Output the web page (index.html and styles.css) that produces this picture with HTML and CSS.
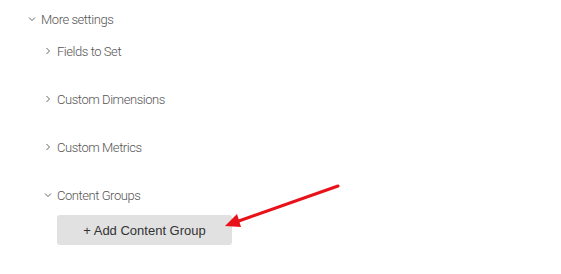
FILE: index.html
```html
<!DOCTYPE html>
<html lang="en">
<head>
    <meta charset="UTF-8">
    <title>More settings</title>
    <link rel="stylesheet" href="styles.css">
</head>
<body>
    <div class="settings">
        <div class="row top">
            <svg class="chev" width="8" height="8" viewBox="0 0 8 8"><path d="M1 2.5 L4 5.5 L7 2.5" fill="none" stroke="#666" stroke-width="1"/></svg>
            <span>More settings</span>
        </div>
        <div class="group">
            <div class="row">
                <svg class="chev" width="8" height="8" viewBox="0 0 8 8"><path d="M2.5 1 L5.5 4 L2.5 7" fill="none" stroke="#666" stroke-width="1"/></svg>
                <span>Fields to Set</span>
            </div>
            <div class="row">
                <svg class="chev" width="8" height="8" viewBox="0 0 8 8"><path d="M2.5 1 L5.5 4 L2.5 7" fill="none" stroke="#666" stroke-width="1"/></svg>
                <span>Custom Dimensions</span>
            </div>
            <div class="row">
                <svg class="chev" width="8" height="8" viewBox="0 0 8 8"><path d="M2.5 1 L5.5 4 L2.5 7" fill="none" stroke="#666" stroke-width="1"/></svg>
                <span>Custom Metrics</span>
            </div>
            <div class="row">
                <svg class="chev" width="8" height="8" viewBox="0 0 8 8"><path d="M1 2.5 L4 5.5 L7 2.5" fill="none" stroke="#666" stroke-width="1"/></svg>
                <span>Content Groups</span>
            </div>
            <button class="add-btn" type="button">+ Add Content Group</button>
        </div>
    </div>

    <svg class="arrow" width="561" height="274" viewBox="0 0 561 274">
        <line x1="338" y1="186" x2="236" y2="222" stroke="#e8131a" stroke-width="3" stroke-linecap="round"/>
        <polygon points="225,226 237,214 241,227" fill="#e8131a"/>
    </svg>
</body>
</html>
```

FILE: styles.css
```css
body {
    margin: 0;
    background-color: #fff;
    font-family: Roboto, "Liberation Sans", sans-serif;
    color: #555;
}
.settings {
    padding: 7px 0 0 28px;
}
.row {
    display: flex;
    align-items: center;
    height: 24px;
    font-size: 13px;
    font-weight: 300;
    letter-spacing: -0.45px;
}
.row .chev {
    margin-right: 5px;
}
.group {
    padding-left: 16px;
}
.group .row {
    margin-top: 24px;
}
.group .row:first-child {
    margin-top: 8px;
}
.add-btn {
    display: block;
    margin: 8px 0 0 13px;
    width: 175px;
    height: 30px;
    border: none;
    border-radius: 3px;
    background-color: #e1e1e1;
    color: #333;
    font-family: "Liberation Sans", Arial, sans-serif;
    font-size: 13px;
    cursor: pointer;
}
.arrow {
    position: absolute;
    top: 0;
    left: 0;
    pointer-events: none;
}
```
